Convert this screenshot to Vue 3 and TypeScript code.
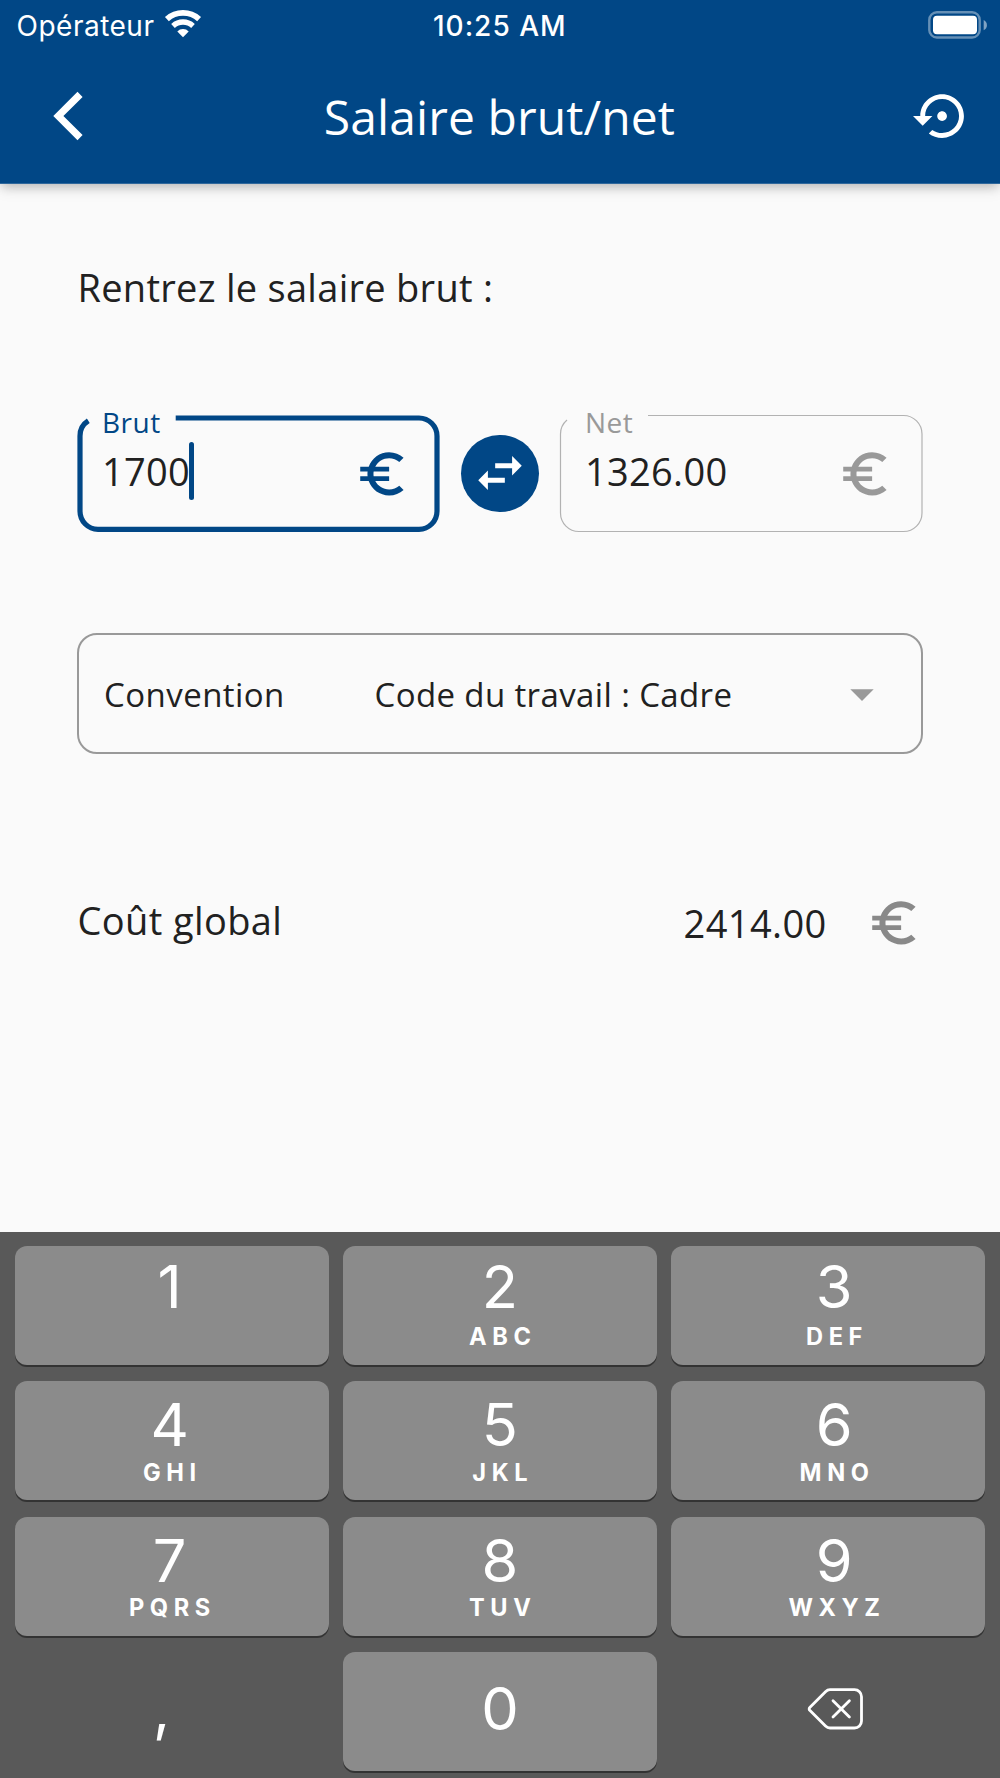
<script setup lang="ts">
import { ref } from 'vue'

interface Key {
  digit: string
  letters?: string
}

const gross = ref('1700')
const net = ref('1326.00')
const total = ref('2414.00')
const agreement = ref('Code du travail : Cadre')

const keyRows: Key[][] = [
  [{ digit: '1' }, { digit: '2', letters: 'ABC' }, { digit: '3', letters: 'DEF' }],
  [{ digit: '4', letters: 'GHI' }, { digit: '5', letters: 'JKL' }, { digit: '6', letters: 'MNO' }],
  [{ digit: '7', letters: 'PQRS' }, { digit: '8', letters: 'TUV' }, { digit: '9', letters: 'WXYZ' }],
]

const euroPath =
  'M15 18.5c-2.51 0-4.68-1.42-5.76-3.5H15v-2H8.58c-.05-.33-.08-.66-.08-1s.03-.67.08-1H15V9H9.24C10.32 6.92 12.5 5.5 15 5.5c1.61 0 3.09.59 4.23 1.57L21 5.3C19.41 3.87 17.3 3 15 3c-3.92 0-7.24 2.51-8.48 6H3v2h3.06c-.04.33-.06.66-.06 1s.02.67.06 1H3v2h3.52c1.24 3.49 4.56 6 8.48 6 2.31 0 4.41-.87 6-2.3l-1.78-1.77c-1.13.98-2.6 1.57-4.22 1.57z'
</script>

<template>
  <div class="screen">
    <header class="header">
      <div class="status">
        <div class="carrier">
          <span>Opérateur</span>
          <svg class="wifi" width="38" height="28" viewBox="0 0 38 28">
            <path d="M2.9 9.1A24.1 24.1 0 0 1 35.1 9.1" fill="none" stroke="#fff" stroke-width="5.8" />
            <path d="M9 15.9A14.9 14.9 0 0 1 29 15.9" fill="none" stroke="#fff" stroke-width="5.4" />
            <path d="M19 27.2L13.3 21.5A8 8 0 0 1 24.7 21.5Z" fill="#fff" />
          </svg>
        </div>
        <span class="clock">10:25 AM</span>
        <svg class="battery" width="60" height="28" viewBox="0 0 60 28">
          <rect x="1.3" y="1.3" width="50.4" height="25.2" rx="7.6" fill="none" stroke="#fff" stroke-opacity=".4" stroke-width="2.4" />
          <rect x="5" y="4.8" width="44" height="18.4" rx="4" fill="#fff" />
          <path d="M55.7 9C60 11 60 17.3 55.7 19.3Z" fill="#fff" fill-opacity=".5" />
        </svg>
      </div>
      <div class="bar">
        <svg class="back" width="30" height="50" viewBox="0 0 30 50">
          <path d="M.3 25L24.5 .7L29.6 5.9L10.4 25L29.6 44.1L24.5 49.3Z" fill="#fff" />
        </svg>
        <h1>Salaire brut/net</h1>
        <svg class="restore" width="58.2" height="58.2" viewBox="0 0 24 24">
          <path
            fill="#fff"
            d="M14 12c0-1.1-.9-2-2-2s-2 .9-2 2 .9 2 2 2 2-.9 2-2zm-2-9c-4.97 0-9 4.03-9 9H0l4 4 4-4H5c0-3.87 3.13-7 7-7s7 3.13 7 7-3.13 7-7 7c-1.51 0-2.91-.49-4.06-1.3l-1.42 1.44C8.04 20.3 9.94 21 12 21c4.97 0 9-4.03 9-9s-4.03-9-9-9z"
          />
        </svg>
      </div>
    </header>

    <main class="content">
      <p class="prompt">Rentrez le salaire brut :</p>

      <div class="fields">
        <div class="field active">
          <svg class="outline" width="363" height="117" viewBox="0 0 363 117">
            <path d="M98.7 3H342a18 18 0 0 1 18 18V96.3a18 18 0 0 1-18 18H21a18 18 0 0 1-18-18V21A18 18 0 0 1 11.3 5.8" />
          </svg>
          <label>Brut</label>
          <span class="value">{{ gross }}<i class="caret"></i></span>
          <svg class="euro" width="57.8" height="57.8" viewBox="0 0 24 24"><path :d="euroPath" /></svg>
        </div>
        <button class="swap" type="button" aria-label="Inverser">
          <svg width="58" height="58" viewBox="0 0 24 24">
            <path fill="#fff" d="M6.99 11L3 15l3.99 4v-3H14v-2H6.99v-3zM21 9l-3.99-4v3H10v2h7.01v3L21 9z" />
          </svg>
        </button>
        <div class="field">
          <svg class="outline" width="363" height="117" viewBox="0 0 363 117">
            <path d="M88 .5H343.5a18.5 18.5 0 0 1 18.5 18.5V98a18.5 18.5 0 0 1-18.5 18.5H19a18.5 18.5 0 0 1-18.5-18.5V19A18.5 18.5 0 0 1 7 5" />
          </svg>
          <label>Net</label>
          <span class="value">{{ net }}</span>
          <svg class="euro" width="57.8" height="57.8" viewBox="0 0 24 24"><path :d="euroPath" /></svg>
        </div>
      </div>

      <div class="select">
        <span class="select-name">Convention</span>
        <span class="select-value">{{ agreement }}</span>
        <svg width="56" height="56" viewBox="0 0 24 24"><path fill="#999" d="M7 10l5 5 5-5z" /></svg>
      </div>

      <div class="total">
        <span class="total-name">Coût global</span>
        <span class="total-value">{{ total }}</span>
        <svg class="euro" width="57.8" height="57.8" viewBox="0 0 24 24"><path :d="euroPath" /></svg>
      </div>
    </main>

    <section class="keyboard">
      <div v-for="(row, i) in keyRows" :key="i" class="key-row">
        <div v-for="key in row" :key="key.digit" class="key">
          <span class="digit">{{ key.digit }}</span>
          <span v-if="key.letters" class="letters">{{ key.letters }}</span>
        </div>
      </div>
      <div class="key-row last">
        <div class="key plain"><span class="digit comma">,</span></div>
        <div class="key"><span class="digit">0</span></div>
        <div class="key plain">
          <svg class="erase" width="57" height="42" viewBox="0 0 57 42" fill="none" stroke="#fff" stroke-width="2.8" stroke-linecap="round" stroke-linejoin="round">
            <path d="M23 1.7H47.5a7 7 0 0 1 7 7V33a7 7 0 0 1-7 7H23Q20.5 40 18.5 38L3 22.6Q1.3 20.9 3 19.2L18.5 3.7Q20.5 1.7 23 1.7Z" />
            <path d="M26 12.7L42.4 29.1M42.4 12.7L26 29.1" />
          </svg>
        </div>
      </div>
    </section>
  </div>
</template>

<style>
body {
  margin: 0;
  background: #fafafa;
}
</style>

<style scoped>
.screen {
  display: flex;
  flex-direction: column;
  width: 1000px;
  height: 1778px;
  overflow: hidden;
  background: #fafafa;
  color: #212121;
  font-family: 'Open Sans', sans-serif;
}
svg {
  display: block;
  flex: none;
}
.header {
  position: relative;
  flex: none;
  box-sizing: border-box;
  height: 184px;
  background: #014786;
  border-bottom: 1px solid #2f689c;
  color: #fff;
  box-shadow: 0 4px 10px -2px rgba(0, 0, 0, 0.2), 0 5px 14px rgba(0, 0, 0, 0.1);
}
.status {
  display: grid;
  grid-template-columns: 1fr auto 1fr;
  align-items: center;
  height: 51px;
  padding: 0 12px 0 16.5px;
  font: 400 28px/50px Inter, sans-serif;
}
.carrier {
  display: flex;
  letter-spacing: 0.5px;
}
.wifi {
  margin: 9px 0 0 9.5px;
}
.clock {
  margin-right: 5px;
  font-weight: 500;
  letter-spacing: 1px;
}
.battery {
  justify-self: end;
  margin-top: -2px;
}
.bar {
  display: flex;
  justify-content: space-between;
  align-items: center;
  height: 130px;
  padding: 0 29px 0 53px;
}
h1 {
  margin: 2px 0 0 1px;
  padding-left: 2px;
  font-size: 48px;
  font-weight: 400;
  line-height: 64px;
  letter-spacing: 0.1px;
}
.content {
  display: flex;
  flex: none;
  flex-direction: column;
  height: 1048px;
  box-sizing: border-box;
  padding: 76px 77px 0;
}
.prompt {
  margin: 0 0 0 0.5px;
  font-size: 38px;
  line-height: 54px;
  letter-spacing: 0.28px;
}
.fields {
  display: flex;
  justify-content: space-between;
  align-items: center;
  height: 117px;
  margin-top: 101px;
}
.field {
  position: relative;
  display: flex;
  justify-content: space-between;
  align-items: center;
  box-sizing: border-box;
  width: 363px;
  height: 117px;
  padding: 0 29.5px 0 25px;
}
.outline {
  position: absolute;
  inset: 0;
  overflow: visible;
  fill: none;
  stroke: #b2b2b2;
  stroke-width: 1.2;
}
.field label {
  position: absolute;
  left: 25px;
  top: -12px;
  color: #999;
  font-size: 28px;
  line-height: 38px;
  letter-spacing: 0.5px;
}
.active .outline {
  stroke: #014786;
  stroke-width: 5.2;
}
.active label {
  color: #014786;
}
.value {
  display: flex;
  align-items: center;
  margin-top: -5px;
  font-size: 38px;
  line-height: 54px;
  letter-spacing: 0.3px;
}
.caret {
  width: 5px;
  height: 58px;
  margin: 0 0 0 -1.5px;
  border-radius: 2.5px;
  background: #014786;
}
.euro {
  fill: #999;
}
.active .euro {
  fill: #014786;
}
.swap {
  display: flex;
  justify-content: center;
  align-items: center;
  width: 77.4px;
  height: 77.4px;
  padding: 0;
  border: 0;
  border-radius: 50%;
  background: #014786;
}
.select {
  display: grid;
  grid-template-columns: 270px 1fr 56px;
  align-items: center;
  box-sizing: border-box;
  height: 121px;
  margin-top: 101px;
  padding: 0 31px 0 25px;
  border: 2px solid #999;
  border-radius: 20px;
  font-size: 33px;
  line-height: 46px;
  letter-spacing: 0.38px;
}
.select-name,
.select-value {
  margin-top: 2px;
}
.select-name {
  letter-spacing: 0.45px;
}
.select-value {
  padding-left: 0.5px;
}
.total {
  display: flex;
  align-items: center;
  height: 58px;
  margin-top: 140px;
  font-size: 38px;
  line-height: 54px;
}
.total-name {
  margin: -7px auto 0 0.5px;
  letter-spacing: 0.38px;
}
.total-value {
  margin: -1px 38.5px 0 0;
  letter-spacing: 0.4px;
}
.total .euro {
  fill: #898989;
}
.keyboard {
  display: flex;
  flex: 1;
  flex-direction: column;
  gap: 16.6px;
  padding: 14px 14.8px 0 14.7px;
  background: #595959;
  color: #fff;
  font-family: Inter, sans-serif;
}
.key-row {
  display: grid;
  flex: none;
  grid-template-columns: repeat(3, 1fr);
  gap: 14.4px;
  height: 118.8px;
}
.key {
  display: flex;
  flex-direction: column;
  align-items: center;
  box-sizing: border-box;
  padding-top: 13px;
  border-radius: 12px;
  background: #8b8b8b;
  box-shadow: 0 2px 0 #333;
}
.key:first-child {
  padding-right: 4px;
}
.key:last-child {
  padding-left: 12px;
}
.digit {
  font-size: 59.5px;
  line-height: 60px;
}
.letters {
  margin: 6.5px -5.6px 0 0;
  font-size: 23.6px;
  font-weight: 700;
  line-height: 24px;
  letter-spacing: 5.6px;
}
.key-row:first-child .digit {
  margin: -3px 0 2px;
}
.last .digit {
  margin-top: 12.5px;
}
.key.plain {
  background: none;
  box-shadow: none;
}
.last .comma {
  margin: 12.5px 16px 0 0;
}
.erase {
  margin: 22.5px -2px 0 0;
}
</style>
